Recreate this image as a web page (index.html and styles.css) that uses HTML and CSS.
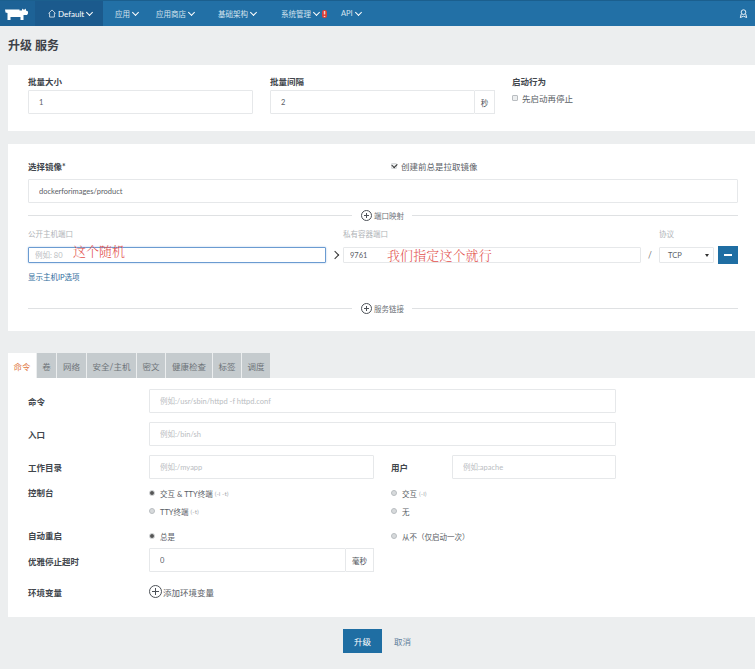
FILE: index.html
```html
<!DOCTYPE html>
<html lang="zh">
<head>
  <meta charset="UTF-8" />
  <meta name="viewport" content="width=device-width, initial-scale=1.0" />
  <title>升级 服务</title>
  <link rel="stylesheet" href="styles.css">
</head>
<body>
  <header class="nav">
    <div class="logo-wrap">
      <svg width="23" height="12" viewBox="0 0 23 12">
        <path fill="#fff" d="M0 1.500h14.500v1h2.500V.5l1 1h2l1-1v2l2 1v2l-1 1.500h-3.500V12h-3V9H5.500v3h-3V5L.5 4.500z"/>
      </svg>
    </div>
    <a class="nav-env">
      <svg width="8" height="9" viewBox="0 0 9 10"><path fill="none" stroke="#fff" stroke-width=".8" d="M.5 5 4.500 1l4 4M1.800 4.500V9h5.400V4.500"/></svg>
      Default <i class="chev"></i>
    </a>
    <a class="nav-item w41">应用 <i class="chev"></i></a>
    <a class="nav-item w62">应用商店 <i class="chev"></i></a>
    <a class="nav-item w63">基础架构 <i class="chev"></i></a>
    <a class="nav-item w60">系统管理 <i class="chev"></i><b class="alert">!</b></a>
    <a class="nav-item">API <i class="chev"></i></a>
    <svg class="user" width="9" height="9" viewBox="0 0 10 10">
      <circle cx="5" cy="3.500" r="2.600" fill="none" stroke="#fff"/>
      <path fill="none" stroke="#fff" d="M2.500 5.500 1.500 9.500 5 8l3.500 1.500-1-4"/>
    </svg>
  </header>

  <h1 class="title">升级 服务</h1>

  <section class="panel panel-scale">
    <div class="scale-row">
      <div class="col-size">
        <label class="lbl">批量大小</label>
        <input class="inp" value="1">
      </div>
      <div class="col-interval">
        <label class="lbl">批量间隔</label>
        <div class="group">
          <input class="inp" value="2">
          <span class="addon addon-s">秒</span>
        </div>
      </div>
      <div class="col-start">
        <label class="lbl">启动行为</label>
        <div class="check"><i class="box"></i>先启动再停止</div>
      </div>
    </div>
  </section>

  <section class="panel panel-image">
    <div class="image-head">
      <label class="lbl">选择镜像*</label>
      <div class="check pull"><i class="box on"></i>创建前总是拉取镜像</div>
    </div>
    <input class="inp" value="dockerforimages/product">

    <div class="divider">
      <span class="divider-text"><i class="plus"></i>端口映射</span>
    </div>

    <div class="port-row port-labels">
      <span class="port-public">公开主机端口</span>
      <span class="port-arrow"></span>
      <span class="port-private">私有容器端口</span>
      <span class="port-slash"></span>
      <span class="port-proto">协议</span>
    </div>
    <div class="port-row">
      <div class="port-public"><input class="inp port focus" placeholder="例如: 80"></div>
      <span class="port-arrow"><i class="arrow"></i></span>
      <div class="port-private"><input class="inp port" value="9761"></div>
      <span class="port-slash">/</span>
      <div class="port-proto"><span class="inp port select">TCP<i class="caret"></i></span></div>
      <button class="btn-remove"><i></i></button>
    </div>
    <a class="link">显示主机IP选项</a>

    <div class="divider divider-link">
      <span class="divider-text"><i class="plus"></i>服务链接</span>
    </div>

    <span class="note note-a">这个随机</span>
    <span class="note note-b">我们指定这个就行</span>
  </section>

  <nav class="tabs">
    <a class="tab active">命令</a>
    <a class="tab">卷</a>
    <a class="tab">网络</a>
    <a class="tab">安全/主机</a>
    <a class="tab">密文</a>
    <a class="tab">健康检查</a>
    <a class="tab">标签</a>
    <a class="tab">调度</a>
  </nav>

  <section class="panel panel-tab">
    <div class="row">
      <label class="lbl-side">命令</label>
      <input class="inp wide" placeholder="例如:/usr/sbin/httpd -f httpd.conf">
    </div>
    <div class="row">
      <label class="lbl-side">入口</label>
      <input class="inp wide" placeholder="例如:/bin/sh">
    </div>
    <div class="row">
      <label class="lbl-side">工作目录</label>
      <input class="inp half" placeholder="例如:/myapp">
      <label class="lbl-user">用户</label>
      <input class="inp user-inp" placeholder="例如:apache">
    </div>
    <div class="row-radio row-console">
      <label class="lbl-side">控制台</label>
      <div class="radio-col">
        <div class="radio"><i class="dot on"></i>交互 &amp; TTY终端 <small>(-i -t)</small></div>
        <div class="radio"><i class="dot"></i>TTY终端 <small>(-t)</small></div>
      </div>
      <div class="radio-col">
        <div class="radio"><i class="dot"></i>交互 <small>(-i)</small></div>
        <div class="radio"><i class="dot"></i>无</div>
      </div>
    </div>
    <div class="row-radio row-restart">
      <label class="lbl-side">自动重启</label>
      <div class="radio-col">
        <div class="radio"><i class="dot on"></i>总是</div>
      </div>
      <div class="radio-col">
        <div class="radio"><i class="dot"></i>从不（仅启动一次）</div>
      </div>
    </div>
    <div class="row row-stop">
      <label class="lbl-side">优雅停止超时</label>
      <div class="group half">
        <input class="inp" value="0">
        <span class="addon addon-ms">毫秒</span>
      </div>
    </div>
    <div class="row row-env">
      <label class="lbl-side">环境变量</label>
      <a class="add-env"><i class="plus plus-big"></i>添加环境变量</a>
    </div>
  </section>

  <div class="actions">
    <button class="btn-primary">升级</button>
    <a class="btn-cancel">取消</a>
  </div>
</body>
</html>
```

FILE: styles.css
```css
* {
  box-sizing: border-box;
}
body {
  margin: 0;
  height: 669px;
  overflow: hidden;
  background-color: #eceeef;
  color: #4a4f55;
  font-family: Lato, "Noto Sans CJK SC", sans-serif;
  font-size: 8.5px;
}
i {
  display: inline-block;
  font-style: normal;
}

/* top bar */
.nav {
  display: flex;
  align-items: center;
  height: 26px;
  background-color: #2270a6;
  border-top: 1px solid #1b5f8e;
  color: #d5e4ef;
  font-size: 7.5px;
}
.logo-wrap {
  display: flex;
  align-items: center;
  width: 35px;
  height: 25px;
  padding-left: 5px;
  background-color: #1d6296;
}
.nav-env {
  display: flex;
  align-items: center;
  gap: 2px;
  width: 68px;
  height: 25px;
  padding-left: 13px;
  margin-right: 12px;
  background-color: #1b5a8d;
  color: #fff;
  font-size: 8px;
}
.nav-item {
  display: flex;
  align-items: center;
  gap: 2px;
}
.w41 { width: 41px; }
.w62 { width: 62px; }
.w63 { width: 63px; }
.w60 { width: 60px; }
.chev {
  width: 5px;
  height: 5px;
  margin: -3px 0 0 1px;
  border-right: 1.3px solid #fff;
  border-bottom: 1.3px solid #fff;
  transform: rotate(45deg);
}
.alert {
  width: 5px;
  height: 8px;
  margin-left: 1px;
  border-radius: 2px;
  background-color: #d9413a;
  color: #fff;
  font-size: 8px;
  line-height: 8px;
  text-align: center;
}
.user {
  margin-left: auto;
  margin-right: 7px;
}

.title {
  margin: 12px 0 0 8px;
  height: 27px;
  font-size: 12px;
  font-weight: 700;
  line-height: 15px;
  color: #3d4248;
}

.panel {
  margin-left: 8px;
  background-color: #fff;
  position: relative;
}

/* labels and inputs */
.lbl {
  display: block;
  height: 15px;
  padding-top: 1px;
  font-weight: 700;
  line-height: 12px;
  color: #41464c;
}
.inp {
  display: block;
  width: 100%;
  height: 24px;
  padding: 0 10px;
  border: 1px solid #e6e8ea;
  border-radius: 1px;
  background-color: #fff;
  color: #5a6066;
  font: inherit;
  font-size: 7.5px;
  outline: none;
}
.inp::placeholder {
  color: #b9bdc1;
}
.group {
  display: flex;
}
.addon {
  flex: none;
  display: flex;
  align-items: center;
  justify-content: center;
  height: 24px;
  border: 1px solid #e6e8ea;
  border-left: 0;
  background-color: #fff;
  font-size: 7.5px;
}
.addon-s { width: 20px; }
.addon-ms { width: 28px; }
.check {
  display: flex;
  align-items: center;
  gap: 4px;
  color: #5a6066;
}
.box {
  position: relative;
  width: 6px;
  height: 6px;
  border: 1px solid #b9bdc1;
  border-radius: 1px;
  background-color: #eceeef;
}
.box.on {
  border-color: #d7dadc;
}
.box.on::after {
  content: "";
  position: absolute;
  left: 0;
  top: -1px;
  width: 4px;
  height: 3px;
  border-left: 1.300px solid #333;
  border-bottom: 1.300px solid #333;
  transform: rotate(-45deg);
}

/* first panel */
.panel-scale {
  height: 66px;
  padding: 10px 20px 0;
}
.scale-row {
  display: flex;
}
.col-size {
  width: 225px;
  margin-right: 17px;
}
.col-interval {
  width: 225px;
  margin-right: 17px;
}
.col-start .check {
  margin-top: 2px;
}

/* second panel */
.panel-image {
  height: 187px;
  margin-top: 13px;
  padding: 16px 17px 0 20px;
}
.image-head {
  display: flex;
  height: 19px;
}
.image-head .lbl {
  width: 363px;
}
.pull {
  height: 10px;
  margin-top: 1px;
}
.divider {
  display: flex;
  align-items: center;
  height: 10px;
  margin-top: 7px;
  justify-content: center;
  background: linear-gradient(#dfe1e3, #dfe1e3) center / 100% 1px no-repeat;
}
.divider-text {
  display: flex;
  align-items: center;
  gap: 2px;
  margin-left: -2px;
  padding: 0 8px 0 9px;
  background-color: #fff;
  color: #6c7177;
  font-size: 7.5px;
}
.divider-link {
  margin-top: 19px;
}
.plus {
  flex: none;
  width: 11px;
  height: 11px;
  border: 1px solid #4c5157;
  border-radius: 50%;
  background:
    linear-gradient(#4c5157, #4c5157) center / 5px 1px no-repeat,
    linear-gradient(#4c5157, #4c5157) center / 1px 5px no-repeat;
}
.plus-big {
  width: 13px;
  height: 13px;
  background-size: 7px 1px, 1px 7px;
}
.port-row {
  display: flex;
  align-items: center;
}
.port-labels {
  height: 17px;
  margin-top: 9px;
  color: #b0b4b8;
  font-size: 7.5px;
  line-height: 11px;
  align-items: flex-start;
}
.port-public { width: 298px; }
.port-arrow {
  display: flex;
  width: 17px;
  justify-content: center;
}
.port-private { width: 298px; }
.port-slash {
  width: 18px;
  text-align: center;
  color: #777;
}
.port-proto { width: 55px; }
.inp.port {
  height: 16px;
  padding: 0 6px;
}
.focus {
  border: 1.5px solid #6b9bd1;
  box-shadow: 0 0 2px #a9c6e6;
}
.arrow {
  width: 6px;
  height: 6px;
  border-top: 1.5px solid #333;
  border-right: 1.5px solid #333;
  transform: rotate(45deg);
}
.inp.select {
  display: flex;
  align-items: center;
  justify-content: space-between;
  padding: 0 4px 0 8px;
}
.caret {
  border: 2.5px solid transparent;
  border-top: 3.5px solid #333;
  border-bottom: 0;
}
.btn-remove {
  display: flex;
  align-items: center;
  justify-content: center;
  width: 20px;
  height: 18px;
  margin-left: 4px;
  padding: 0;
  border: none;
  background-color: #1f6ea3;
}
.btn-remove i {
  width: 8px;
  height: 2px;
  background-color: #fff;
}
.link {
  display: block;
  margin-top: 8px;
  line-height: 12px;
  font-size: 7.5px;
  color: #2f6d9c;
}

/* red handwritten notes over the port fields */
.note {
  position: absolute;
  color: #e2504c;
  font-family: "Noto Serif CJK SC", "Noto Sans CJK SC", serif;
  font-weight: 300;
  white-space: nowrap;
}
.note-a {
  left: 65px;
  top: 97px;
  font-size: 13px;
}
.note-b {
  left: 379px;
  top: 101px;
  font-size: 13px;
  letter-spacing: .1px;
}

/* tabs */
.tabs {
  display: flex;
  gap: 1px;
  height: 25px;
  margin: 22px 0 0 8px;
}
.tab {
  display: flex;
  align-items: center;
  justify-content: center;
  width: 28px;
  background-color: #c5cbce;
  color: #6e7479;
  white-space: nowrap;
}
.tab.active { background-color: #fff; color: #e0763f; }
.tab:nth-child(2) { width: 19px; }
.tab:nth-child(3) { width: 29px; }
.tab:nth-child(4) { width: 49px; }
.tab:nth-child(6) { width: 46px; }

/* third panel */
.panel-tab {
  height: 239px;
  padding: 11px 0 0 20px;
}
.row,
.row-radio {
  display: flex;
  align-items: center;
  margin-bottom: 9px;
}
.lbl-side {
  flex: none;
  width: 121px;
  font-weight: 700;
  color: #41464c;
}
.wide {
  width: 467px;
}
.half {
  width: 225px;
}
.lbl-user {
  width: 61px;
  margin-left: 17px;
  font-weight: 700;
  color: #41464c;
}
.user-inp {
  width: 164px;
}
.row-radio {
  align-items: flex-start;
}
.row-console {
  margin-top: -1px;
  margin-bottom: 7px;
}
.row-console .lbl-side,
.row-restart .lbl-side {
  line-height: 12px;
}
.radio-col {
  width: 242px;
}
.radio {
  display: flex;
  align-items: center;
  height: 12px;
  margin-bottom: 6px;
  font-size: 7.5px;
  color: #5a6066;
}
.radio small {
  margin-left: 2px;
  font-size: 6.5px;
  color: #a7abaf;
}
.dot {
  width: 6px;
  height: 6px;
  margin-right: 5px;
  border-radius: 50%;
  background-color: #d7dadc;
  border: 1px solid #b9bdc1;
}
.dot.on {
  background-color: #555;
  border: 1px solid #d7dadc;
}
.row-restart,
.row-stop {
  margin-bottom: 0;
}
.row-stop {
  margin-top: 1px;
}
.row-stop .group {
  margin-top: -1px;
}
.row-env {
  margin-top: 13px;
}
.add-env {
  display: flex;
  align-items: center;
  gap: 1px;
  color: #5a6066;
}

.actions {
  display: flex;
  align-items: center;
  margin: 12px 0 0 343px;
}
.btn-primary {
  width: 39px;
  height: 24px;
  border: none;
  background-color: #1f6ea3;
  color: #fff;
  font: inherit;
}
.btn-cancel {
  margin-left: 12px;
  color: #5f7f9b;
}
```
